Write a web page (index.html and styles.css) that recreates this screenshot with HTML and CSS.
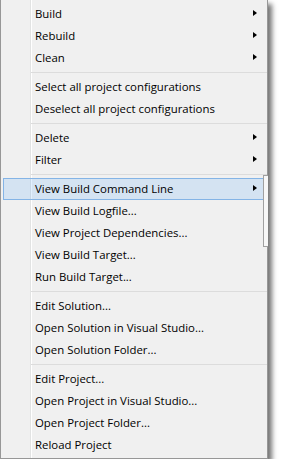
FILE: index.html
```html
<!DOCTYPE html>
<html lang="en">
<head>
    <meta charset="UTF-8">
    <title>Project context menu</title>
    <link rel="stylesheet" href="styles.css">
</head>
<body>
<div class="menu">
    <div class="item">Build<span class="arrow"></span></div>
    <div class="item">Rebuild<span class="arrow"></span></div>
    <div class="item">Clean<span class="arrow"></span></div>
    <div class="sep"></div>
    <div class="item">Select all project configurations</div>
    <div class="item">Deselect all project configurations</div>
    <div class="sep"></div>
    <div class="item">Delete<span class="arrow"></span></div>
    <div class="item">Filter<span class="arrow"></span></div>
    <div class="sep"></div>
    <div class="item active">View Build Command Line<span class="arrow"></span></div>
    <div class="item">View Build Logfile...</div>
    <div class="item">View Project Dependencies...</div>
    <div class="item">View Build Target...</div>
    <div class="item">Run Build Target...</div>
    <div class="sep"></div>
    <div class="item">Edit Solution...</div>
    <div class="item">Open Solution in Visual Studio...</div>
    <div class="item">Open Solution Folder...</div>
    <div class="sep"></div>
    <div class="item">Edit Project...</div>
    <div class="item">Open Project in Visual Studio...</div>
    <div class="item">Open Project Folder...</div>
    <div class="item">Reload Project</div>

    <!-- edge of the submenu peeking out behind -->
    <div class="submenu-edge"></div>
</div>
</body>
</html>
```

FILE: styles.css
```css
body {
    margin: 0;
    background: #ffffff;
    font-family: 'Open Sans', 'Noto Sans', sans-serif;
    font-size: 11.4px;
    color: #000;
}

.menu {
    position: relative;
    width: 266px;
    padding: 3px 0 2px;
    border: 1px solid #979797;
    border-top: none;
    background: linear-gradient(to right, #f0f0f0 29px, #e2e3e3 29px 30px, #ffffff 30px 31px, #f0f0f0 31px);
    box-shadow: 4px 4px 5px rgba(0,0,0,0.55);
}

.item {
    position: relative;
    height: 22px;
    line-height: 20px;
    padding-left: 32px;
    margin: 0 3px 0 2px;
    border: 1px solid transparent;
    border-left: none;
    border-right: none;
    box-sizing: border-box;
    white-space: nowrap;
}

.item.active {
    padding-left: 31px;
    border: 1px solid #84b4e6;
    background: rgba(51,153,255,0.15);
}

.arrow {
    position: absolute;
    right: 7px;
    top: 6px;
    width: 0;
    height: 0;
    border-left: 4px solid #000;
    border-top: 3.5px solid transparent;
    border-bottom: 3.5px solid transparent;
}

.item.active .arrow {
    right: 6px;
    top: 6px;
}

.sep {
    height: 1px;
    margin: 3px 0 3px 30px;
    background: #dcdcdc;
}

.submenu-edge {
    position: absolute;
    left: 262px;
    top: 175px;
    width: 4px;
    height: 70px;
    border: 1px solid #a0a0a0;
    border-right: none;
    background: #f7f7f7;
}
```
